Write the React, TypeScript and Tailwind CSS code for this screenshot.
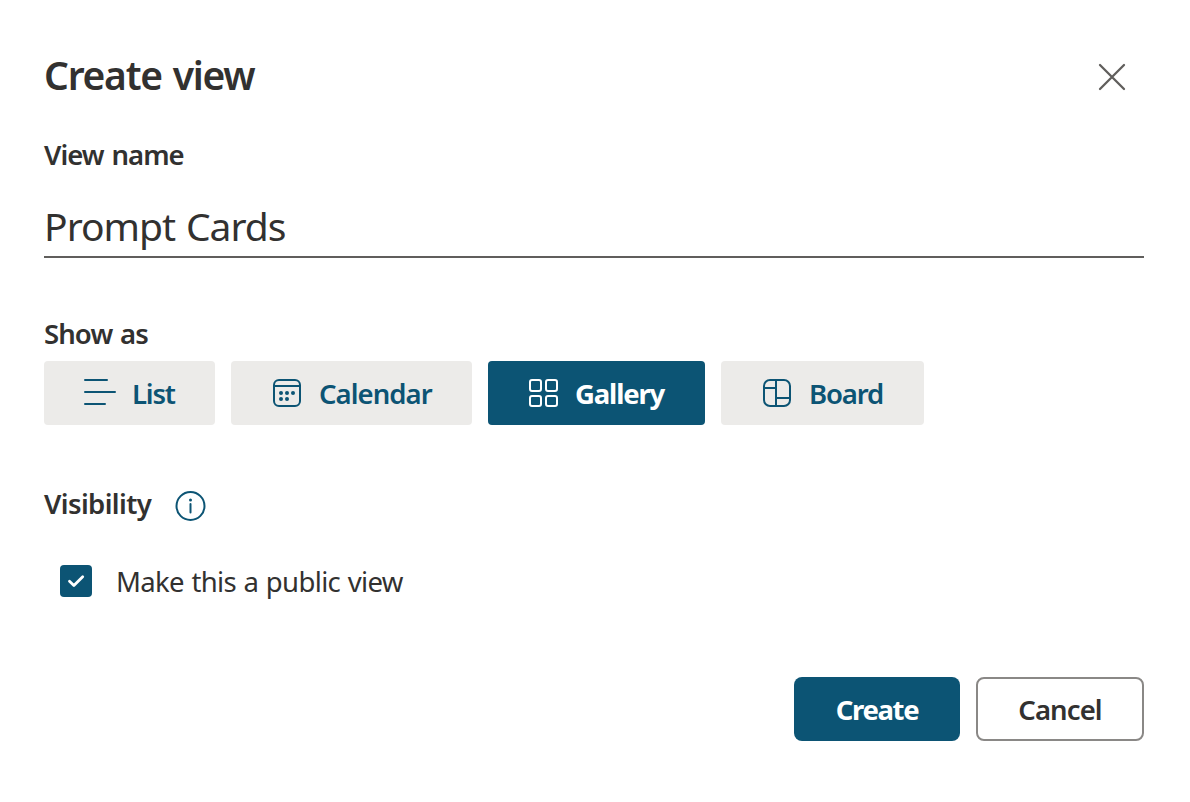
import { useState, type ReactNode } from 'react';

const iconProps = {
  width: 32,
  height: 32,
  viewBox: '0 0 32 32',
  fill: 'none',
  stroke: 'currentColor',
  strokeWidth: 2,
  strokeLinecap: 'round' as const,
  strokeLinejoin: 'round' as const,
};

const ListIcon = () => (
  <svg {...iconProps} className="shrink-0">
    <path d="M1 3H23M1 15H31M1 27H21" />
  </svg>
);

const CalendarIcon = () => (
  <svg {...iconProps} className="shrink-0">
    <rect x="3" y="3" width="26" height="26" rx="5" />
    <path d="M3 9H29" />
    <g fill="currentColor" stroke="none">
      <circle cx="10" cy="16" r="2" />
      <circle cx="16" cy="16" r="2" />
      <circle cx="22" cy="16" r="2" />
      <circle cx="10" cy="22" r="2" />
      <circle cx="16" cy="22" r="2" />
    </g>
  </svg>
);

const GalleryIcon = () => (
  <svg {...iconProps} className="shrink-0">
    <rect x="2" y="3" width="11" height="11" rx="2" />
    <rect x="18" y="3" width="11" height="11" rx="2" />
    <rect x="2" y="19" width="11" height="10" rx="2" />
    <rect x="18" y="19" width="11" height="10" rx="2" />
  </svg>
);

const BoardIcon = () => (
  <svg {...iconProps} className="shrink-0">
    <rect x="3" y="3" width="26" height="26" rx="6" />
    <path d="M15 3V29M3 11H15M15 21H29" />
  </svg>
);

const views: { name: string; icon: ReactNode; width: string; label: string }[] = [
  { name: 'List', icon: <ListIcon />, width: 'w-[171px]', label: 'tracking-[-1.2px]' },
  { name: 'Calendar', icon: <CalendarIcon />, width: 'w-[241px]', label: 'tracking-[-0.95px]' },
  { name: 'Gallery', icon: <GalleryIcon />, width: 'w-[217px]', label: 'tracking-[-1.15px] ml-[-1px]' },
  { name: 'Board', icon: <BoardIcon />, width: 'w-[203px]', label: 'tracking-[-1.15px]' },
];

export default function App() {
  const [selected, setSelected] = useState('Gallery');
  const [isPublic, setIsPublic] = useState(true);

  return (
    <div className="flex h-[802px] w-[1190px] flex-col bg-white pt-[55px] pr-[46px] pl-[44px] font-['Noto_Sans',sans-serif] text-[27.5px] text-[#323130]">
      <header className="flex h-10 items-center justify-between pr-[18px]">
        <h1 className="text-[39px] leading-10 font-semibold tracking-[-1.25px] [word-spacing:2px]">Create view</h1>
        <button aria-label="Close" className="pt-[4px] text-[#605e5c]">
          <svg width="28" height="28" viewBox="0 0 28 28" fill="none" stroke="currentColor" strokeWidth="2.3" strokeLinecap="round">
            <path d="M2 2L26 26M26 2L2 26" />
          </svg>
        </button>
      </header>

      <label className="mt-10 block h-10 leading-10 font-semibold tracking-[-0.95px] [word-spacing:1.5px]">View name</label>
      <div className="mt-[31px] h-[52px] border-b-2 border-[#605e5c] text-[39px] leading-10 tracking-[-0.97px] [word-spacing:1.5px]">Prompt Cards</div>

      <h2 className="mt-[58px] h-9 leading-9 font-semibold tracking-[-0.9px] [word-spacing:1.5px]">Show as</h2>
      <div className="mt-[9px] flex gap-4">
        {views.map((v) => (
          <button
            key={v.name}
            onClick={() => setSelected(v.name)}
            className={`flex h-16 items-center gap-4 rounded-[4px] pl-10 leading-9 whitespace-nowrap ${v.width} ${
              selected === v.name ? 'bg-[#0c5474] font-bold text-white' : 'bg-[#ecebe9] font-semibold text-[#0c5474]'
            }`}
          >
            {v.icon}
            <span className={`pt-[2px] ${v.label}`}>{v.name}</span>
          </button>
        ))}
      </div>

      <div className="mt-[61px] flex h-9 items-center gap-6">
        <h2 className="w-[106px] leading-9 font-semibold tracking-[-0.6px]">Visibility</h2>
        <svg width="32" height="32" viewBox="0 0 32 32" fill="none" stroke="#0c5474" strokeWidth="2" className="mt-[4px]">
          <circle cx="16.5" cy="16" r="14" />
          <path d="M16.5 14V22.5" strokeLinecap="round" />
          <circle cx="16.5" cy="10" r="1.5" fill="#0c5474" stroke="none" />
        </svg>
      </div>

      <div className="mt-[43px] flex h-8 items-center gap-6 pl-4">
        <button
          role="checkbox"
          aria-checked={isPublic}
          aria-label="Make this a public view"
          onClick={() => setIsPublic(!isPublic)}
          className="flex h-8 w-8 items-center justify-center rounded-[4px] bg-[#0c5474]"
        >
          {isPublic && (
            <svg width="32" height="32" viewBox="0 0 32 32" fill="none" stroke="white" strokeWidth="2.8" strokeLinecap="round" strokeLinejoin="round">
              <path d="M9.5 16.3L13.9 20.5L22.7 11.7" />
            </svg>
          )}
        </button>
        <span className="pt-[2px] leading-8 tracking-[-0.65px] [word-spacing:1px]">Make this a public view</span>
      </div>

      <footer className="mt-20 flex justify-end gap-4">
        <button className="h-16 w-[166px] rounded-[8px] bg-[#0c5474] pt-[2px] font-bold tracking-[-1.35px] text-white">Create</button>
        <button className="h-16 w-[168px] rounded-[8px] border-2 border-[#8a8886] pt-[2px] font-semibold tracking-[-0.9px]">Cancel</button>
      </footer>
    </div>
  );
}
